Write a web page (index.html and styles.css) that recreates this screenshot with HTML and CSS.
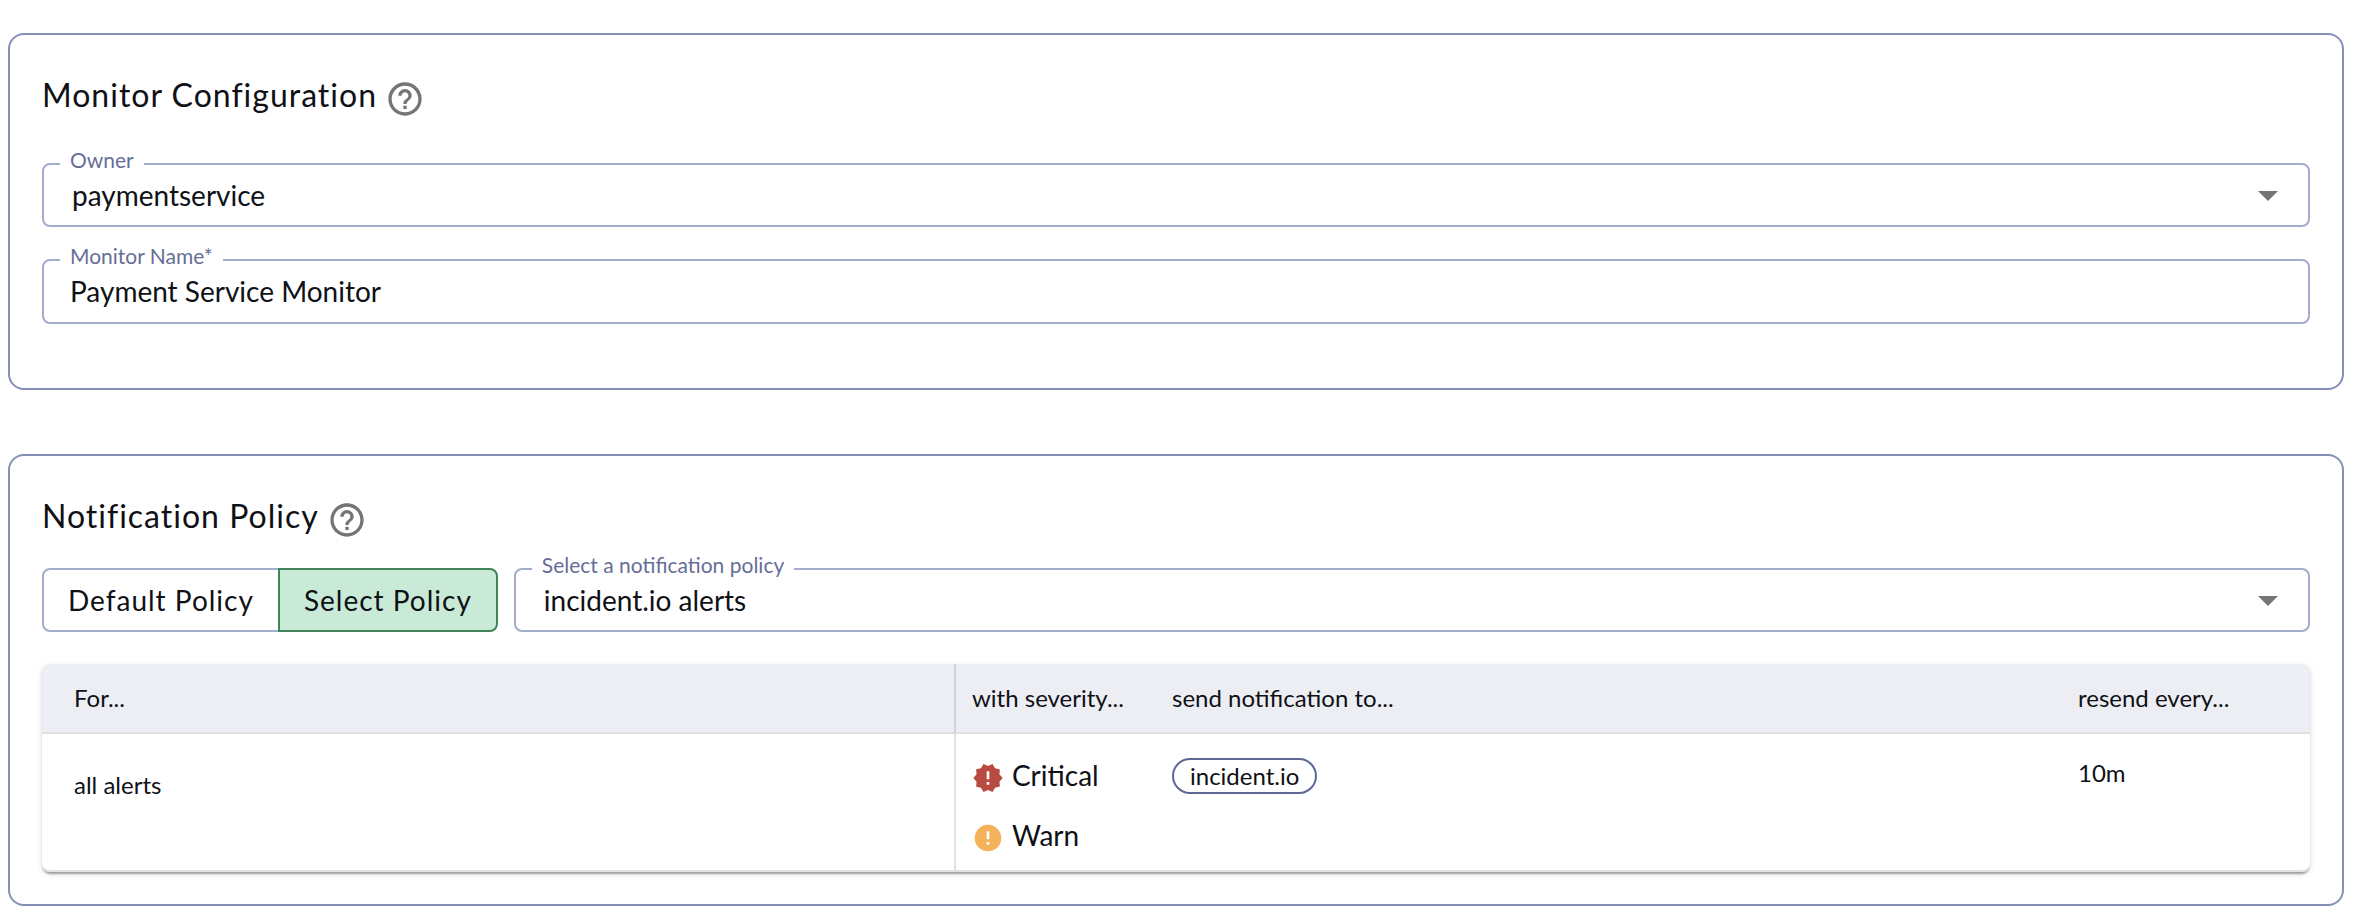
FILE: index.html
```
<!DOCTYPE html>
<html lang="en">
<head>
    <meta charset="UTF-8">
    <meta name="viewport" content="width=device-width, initial-scale=1.0">
    <title>Payment Service Monitor</title>
    <link rel="stylesheet" href="styles.css">
</head>
<body>

    <section class="card">
        <div class="card-title">
            <h2>Monitor Configuration</h2>
            <svg class="help-icon" viewBox="0 0 24 24"><path d="M11 18h2v-2h-2v2zm1-16C6.48 2 2 6.48 2 12s4.480 10 10 10 10-4.480 10-10S17.520 2 12 2zm0 18c-4.410 0-8-3.590-8-8s3.590-8 8-8 8 3.590 8 8-3.590 8-8 8zm0-14c-2.210 0-4 1.790-4 4h2c0-1.100.9-2 2-2s2 .9 2 2c0 2-3 1.750-3 5h2c0-2.250 3-2.500 3-5 0-2.210-1.790-4-4-4z"/></svg>
        </div>
        <div class="fields">
            <div class="field">
                <label for="owner">Owner</label>
                <select id="owner">
                    <option>paymentservice</option>
                </select>
                <svg class="arrow" viewBox="0 0 24 24"><path d="M7 10l5 5 5-5z"/></svg>
            </div>
            <div class="field">
                <label for="monitor-name">Monitor Name*</label>
                <input type="text" id="monitor-name" value="Payment Service Monitor" required>
            </div>
        </div>
    </section>

    <section class="card">
        <div class="card-title">
            <h2>Notification Policy</h2>
            <svg class="help-icon" viewBox="0 0 24 24"><path d="M11 18h2v-2h-2v2zm1-16C6.48 2 2 6.48 2 12s4.480 10 10 10 10-4.480 10-10S17.520 2 12 2zm0 18c-4.410 0-8-3.590-8-8s3.590-8 8-8 8 3.590 8 8-3.590 8-8 8zm0-14c-2.210 0-4 1.790-4 4h2c0-1.100.9-2 2-2s2 .9 2 2c0 2-3 1.750-3 5h2c0-2.250 3-2.500 3-5 0-2.210-1.790-4-4-4z"/></svg>
        </div>
        <div class="policy-row">
            <div class="toggle-group">
                <button type="button">Default Policy</button>
                <button type="button" class="selected" aria-pressed="true">Select Policy</button>
            </div>
            <div class="field">
                <label for="policy">Select a notification policy</label>
                <select id="policy">
                    <option>incident.io alerts</option>
                </select>
                <svg class="arrow" viewBox="0 0 24 24"><path d="M7 10l5 5 5-5z"/></svg>
            </div>
        </div>

        <table class="routes">
            <thead>
                <tr>
                    <th class="col-for">For...</th>
                    <th class="col-severity">with severity...</th>
                    <th class="col-send">send notification to...</th>
                    <th class="col-resend">resend every...</th>
                </tr>
            </thead>
            <tbody>
                <tr>
                    <td class="col-for">all alerts</td>
                    <td class="col-severity">
                        <div class="severity critical">
                            <svg viewBox="0 0 24 24"><path d="M23 12l-2.440-2.780.340-3.680-3.610-.820-1.890-3.180L12 3 8.600 1.540 6.710 4.720l-3.610.810.340 3.680L1 12l2.440 2.780-.340 3.690 3.610.820 1.890 3.180L12 21l3.400 1.460 1.890-3.180 3.610-.820-.340-3.680L23 12zm-10 5h-2v-2h2v2zm0-4h-2V7h2v6z"/></svg>
                            <span>Critical</span>
                        </div>
                        <div class="severity warn">
                            <svg viewBox="0 0 24 24"><path d="M12 2C6.480 2 2 6.480 2 12s4.480 10 10 10 10-4.480 10-10S17.520 2 12 2zm1 15h-2v-2h2v2zm0-4h-2V7h2v6z"/></svg>
                            <span>Warn</span>
                        </div>
                    </td>
                    <td class="col-send"><span class="chip">incident.io</span></td>
                    <td class="col-resend">10m</td>
                </tr>
            </tbody>
        </table>
    </section>

</body>
</html>
```
FILE: styles.css
```
* { box-sizing: border-box; }
body { font-family: Lato, "Liberation Sans", sans-serif; margin: 0; padding: 33px 20px 12px 8px; background-color: #fff; color: #0f1116; display: flex; flex-direction: column; gap: 64px; }

.card { border: 2px solid #8690b6; border-radius: 16px; padding: 40px 32px 32px; }
.card-title { display: flex; align-items: flex-end; gap: 8px; height: 44px; }
.card-title h2 { margin: 0; align-self: flex-start; font-size: 32px; line-height: 40px; font-weight: 400; letter-spacing: 1px; }
.help-icon { width: 40px; height: 40px; fill: #757575; }

/* Outlined fields, the label sits on the top border */
.fields { display: flex; flex-direction: column; gap: 32px; padding: 44px 0 32px; }
.field { position: relative; flex: 1; }
.field label { position: absolute; left: 18px; top: -16px; padding: 0 10px; background-color: #fff; color: #666e98; font-size: 21px; line-height: 26px; }
.field input, .field select { display: block; width: 100%; height: 64px; margin: 0; border: 2px solid #a3acca; border-radius: 8px; background-color: #fff; color: #0f1116; font-family: inherit; font-size: 28px; outline: none; appearance: none; }
.field input { height: 65px; padding: 0 26px 2px; }
.field select { padding: 0 66px 0 28px; }
.arrow { position: absolute; right: 18px; top: 8px; width: 48px; height: 48px; fill: #757575; pointer-events: none; }

.policy-row { display: flex; gap: 16px; padding: 28px 0 32px; }
.toggle-group { display: flex; }
.toggle-group button { height: 64px; padding: 0 24px; border: 2px solid #a3acca; border-radius: 8px 0 0 8px; background-color: #fff; color: #0f1116; font-family: inherit; font-size: 28px; letter-spacing: 1px; cursor: pointer; }
.toggle-group button.selected { margin-left: -2px; border-color: #42845a; border-radius: 0 8px 8px 0; background-color: #c9ead6; }

.routes { width: 100%; table-layout: fixed; border-collapse: separate; border-spacing: 0; border-radius: 8px; font-size: 24px; line-height: 32px; box-shadow: 0 4px 2px -2px rgba(0,0,0,0.2), 0 2px 2px rgba(0,0,0,0.14), 0 2px 6px rgba(0,0,0,0.12); }
.routes th { height: 70px; padding: 0 16px; background-color: #edeef4; border-bottom: 2px solid #e0e0e0; font-weight: 400; text-align: left; }
.routes td { height: 138px; padding: 23px 16px 0; border-bottom: 2px solid #e0e0e0; vertical-align: top; }
.routes th:first-child { border-top-left-radius: 8px; }
.routes th:last-child { border-top-right-radius: 8px; }
.routes td:first-child { border-bottom-left-radius: 8px; }
.routes td:last-child { border-bottom-right-radius: 8px; }
.routes .col-for { width: 914px; padding-left: 32px; border-right: 2px solid rgba(0,0,0,0.12); }
.routes td.col-for { padding-top: 35px; }
.routes td.col-send { padding-top: 24px; }
.routes .col-severity { width: 200px; }
.routes .col-resend { width: 248px; }
.severity { display: flex; align-items: center; gap: 8px; height: 36px; margin-bottom: 24px; font-size: 28px; }
.severity:last-child { margin-bottom: 0; }
.severity svg { width: 32px; height: 32px; margin-top: 6px; }
.critical svg { fill: #b94a42; }
.warn svg { fill: #f5b25a; }
.chip { display: inline-block; height: 36px; padding: 0 16px; border: 2px solid #5f6794; border-radius: 18px; }
```
